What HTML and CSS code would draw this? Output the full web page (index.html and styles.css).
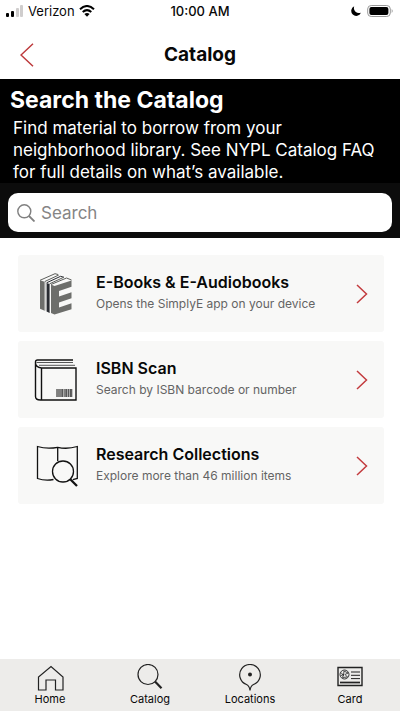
FILE: index.html
```
<!DOCTYPE html>
<html lang="en">
<head>
<meta charset="utf-8">
<meta name="viewport" content="width=device-width, initial-scale=1">
<title>Catalog</title>
<link rel="stylesheet" href="styles.css">
</head>
<body>
<div class="app">
  <div class="status">
    <div class="status-left">
      <svg width="18" height="12" viewBox="0 0 18 12" aria-hidden="true"><rect x="0" y="8" width="3" height="4" rx="1"/><rect x="5" y="6" width="3" height="6" rx="1"/><g fill="#cfcdcd"><rect x="10" y="3" width="3" height="9" rx="1"/><rect x="14" y="0" width="3" height="12" rx="1"/></g></svg>
      <span>Verizon</span>
      <svg width="16" height="12" viewBox="0 0 16 12" aria-hidden="true"><g fill="none" stroke="#000" stroke-width="2"><path d="M1 4.300Q8-2.300 15 4.300"/><path d="M3.700 7Q8 3.200 12.300 7"/></g><path d="M5.400 9Q8 6.900 10.600 9L8 11.700z"/></svg>
    </div>
    <span class="time">10:00 AM</span>
    <div class="status-right">
      <svg width="10" height="10" viewBox="0 0 10 10" aria-hidden="true"><path d="M3.200.3A5 5 0 1 0 9.900 6.700 5.100 5.100 0 0 1 3.200.3z"/></svg>
      <svg width="27" height="12" viewBox="0 0 27 12" aria-hidden="true"><rect x=".7" y=".5" width="22.600" height="11" rx="3.500" fill="none" stroke="#999"/><rect x="2.400" y="2" width="19" height="8" rx="2"/><path d="M24.700 4q2 2 0 4z" fill="#999"/></svg>
    </div>
  </div>
  <header class="topbar">
    <button class="back" aria-label="Back"><svg width="14" height="24" viewBox="0 0 14 24" fill="none" stroke="#bd3a3c" stroke-width="1.500"><path d="M13 .7 1 12l12 11.300"/></svg></button>
    <h1>Catalog</h1>
  </header>
  <section class="intro">
    <h2>Search the Catalog</h2>
    <p>Find material to borrow from your<br>neighborhood library. See NYPL Catalog FAQ<br>for full details on what’s available.</p>
  </section>
  <form class="search" role="search">
    <label class="field">
      <svg width="18" height="18" viewBox="0 0 18 18" fill="none" stroke="#808080" stroke-width="1.400" aria-hidden="true"><circle cx="7.300" cy="7.300" r="6.500"/><path d="m12 12 5.500 5.500" stroke-width="1.800"/></svg>
      <input type="search" placeholder="Search" aria-label="Search">
    </label>
  </form>
  <main class="cards">
    <a class="card" href="#">
      <svg class="icon" width="44" height="44" viewBox="0 0 44 44" aria-hidden="true">
        <g fill="#6d6e6b"><path d="m6 8.300 4.700 1.400v29L6 36.800z"/><path d="m12.600 11 3 1v29l-3-1.500z" fill="#292c32"/><path d="m17 12.500 3.500 1.500 17-5.500v6.300L25 19v5.500l12.500-4.200v6L25 30.500v5l12.500-4.200v6L20.500 42.500 17 41z"/></g>
        <path d="m10.700 9.700.9-.3v29.200l-.9.100z" fill="#b9bab7"/>
        <g fill="none" stroke="#5c5e5b" stroke-width="1"><path d="M6 8.300 21 1.700l3 .8"/><path d="m10.800 9.500 14-6.500"/><path d="m12.600 10.800 14-6.500 3.400 1" stroke="#292c32"/><path d="m15.600 11.800 14-6.500"/><path d="M17 12.500 32.500 6l5 2"/></g>
      </svg>
      <span class="text"><strong>E-Books &amp; E-Audiobooks</strong><small>Opens the SimplyE app on your device</small></span>
      <svg class="chevron" width="12" height="20" viewBox="0 0 12 20" aria-hidden="true"><path d="m1 1 9.500 9L1 19"/></svg>
    </a>
    <a class="card" href="#">
      <svg class="icon" width="44" height="44" viewBox="0 0 44 44" fill="none" stroke="#111" stroke-width="1.400" aria-hidden="true">
        <path d="M39 2H3.500Q1.500 2 1.500 4v34.500q0 3.500 5 3.500H42V10H7.500Q1.500 9 1.500 5M7.500 10v32"/><path d="M2.500 4.500H39M5 7.300h36" stroke="#555" stroke-width="1"/>
        <g stroke="#333" stroke-width="1.100"><path d="M23 31v8m2-8v8m2-8v8m1.500-8v8m2.500-8v8m1.500-8v8m2-8v8m2-8v8m1.200-8v8"/></g><path d="M22.500 35H38" stroke="#777" stroke-opacity=".55" stroke-width="8"/>
      </svg>
      <span class="text"><strong>ISBN Scan</strong><small>Search by ISBN barcode or number</small></span>
      <svg class="chevron" width="12" height="20" viewBox="0 0 12 20" aria-hidden="true"><path d="m1 1 9.500 9L1 19"/></svg>
    </a>
    <a class="card" href="#">
      <svg class="icon" width="44" height="44" viewBox="0 0 44 44" fill="none" stroke="#111" stroke-width="1.300" aria-hidden="true">
        <path d="M19.500 35.500Q11 37 3.500 34.500V2.500Q13 5.300 23.700 3.300 33 5.500 43.300 2.500v32l-4.500 1.100M23.700 3.300V17"/><circle cx="29" cy="27.500" r="10.500"/><path d="m36 35 7 7" stroke-width="2.300"/>
      </svg>
      <span class="text"><strong>Research Collections</strong><small>Explore more than 46 million items</small></span>
      <svg class="chevron" width="12" height="20" viewBox="0 0 12 20" aria-hidden="true"><path d="m1 1 9.500 9L1 19"/></svg>
    </a>
  </main>
  <nav class="tabs">
    <a href="#"><svg width="28" height="28" viewBox="0 0 28 28" aria-hidden="true"><path d="M2.500 26V13L15 2.500 27 13v13h-7.500V16H10v10z"/></svg>Home</a>
    <a href="#"><svg width="28" height="28" viewBox="0 0 28 28" aria-hidden="true"><circle cx="12" cy="10.500" r="10"/><path d="m19 17.500 6.500 6.700" stroke-width="2.200"/></svg>Catalog</a>
    <a href="#"><svg width="28" height="28" viewBox="0 0 28 28" aria-hidden="true"><path d="M14 26.500Q13.500 22 10.500 20.500a10.300 10.300 0 1 1 7 0Q14.500 22 14 26.500z"/><circle cx="14" cy="10.500" r="2" fill="#222" stroke="none"/></svg>Locations</a>
    <a href="#"><svg width="28" height="28" viewBox="0 0 28 28" aria-hidden="true"><path d="M2 3.500h24v18H2z" stroke-width="1.400"/><circle cx="8.500" cy="10.500" r="4.500" stroke-width=".9"/><path d="m5 8.500 2.500 3L8 7l4 2-3 1.500 2.500 2.500-5 .5 1-3-2.500 1" stroke-width=".8"/><path d="M15 8h9M15 11.300h9M15 14.600h9" stroke-width="1"/><path d="M4 18.500h20" stroke-width="1.700"/></svg>Card</a>
  </nav>
</div>
</body>
</html>
```

FILE: styles.css
```
* { box-sizing: border-box; }
body { margin: 0; background: #fff; color: #080808; font-family: Inter, "Liberation Sans", sans-serif; }
h1, h2, p { margin: 0; }
a { color: inherit; text-decoration: none; }
svg { display: block; flex: none; }
.app { min-height: 100vh; display: flex; flex-direction: column; }

.status { height: 22px; padding: 0 6px; display: grid; grid-template-columns: 1fr auto 1fr; align-items: center; font-size: 13px; line-height: 16px; }
.status-left, .status-right { display: flex; align-items: center; gap: 4px; }
.status-right { justify-content: flex-end; gap: 6px; }
.time { font-weight: 500; }

.topbar { height: 57px; padding: 12px 20px 4px; display: grid; grid-template-columns: 1fr auto 1fr; align-items: center; }
.topbar h1 { font-size: 19px; line-height: 24px; font-weight: 700; }
.back { justify-self: start; padding: 0; border: 0; background: none; }

.intro { background: #000; color: #fff; padding: 7px 10px 0; }
.intro h2 { font-size: 23px; line-height: 28px; font-weight: 700; }
.intro p { padding: 3px 3px 0; font-size: 17px; line-height: 22px; white-space: nowrap; }

.search { background: #0c0c0c; padding: 10px 8px 6px; }
.field { height: 39px; padding: 0 9px; display: flex; align-items: center; gap: 6px; background: #fff; border-radius: 10px; }
.field input { flex: 1; min-width: 0; padding: 0; border: 0; outline: 0; background: none; font: inherit; font-size: 17px; line-height: 24px; appearance: none; }
.field input::placeholder { color: #858585; opacity: 1; }

.cards { flex: 1; padding: 17px 16px 16px 18px; display: flex; flex-direction: column; gap: 9px; }
.card { height: 77px; padding: 0 16px; display: flex; align-items: center; gap: 18px; background: #f8f8f7; border-radius: 3px; }
.text { flex: 1; padding-bottom: 4px; display: flex; flex-direction: column; gap: 4px; white-space: nowrap; }
.text strong { font-size: 16px; line-height: 20px; font-weight: 600; }
.text small { font-size: 12px; line-height: 16px; color: #646464; }
.chevron { fill: none; stroke: #c33b3e; stroke-width: 1.5; }

.tabs { height: 52px; padding-top: 5px; display: grid; grid-template-columns: repeat(4, 1fr); background: #edecea; }
.tabs a { display: flex; flex-direction: column; align-items: center; font-size: 11px; line-height: 14px; }
.tabs svg { fill: none; stroke: #222; stroke-width: 1.2; }
```
